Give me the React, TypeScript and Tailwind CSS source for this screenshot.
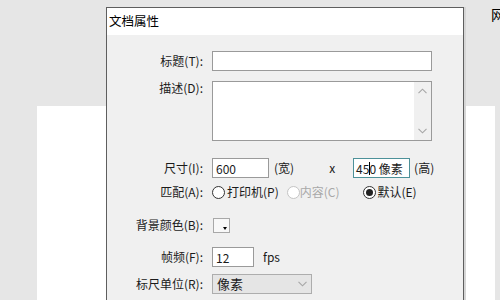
const font = "font-['Microsoft_YaHei','Noto_Sans_CJK_SC',sans-serif]";

const Radio = ({ checked = false, disabled = false }: { checked?: boolean; disabled?: boolean }) => (
  <span
    className={`flex h-[13px] w-[13px] items-center justify-center rounded-full border bg-white ${
      disabled ? "border-[#c4c4c4]" : "border-[#333333]"
    }`}
  >
    {checked && <span className="h-[7px] w-[7px] rounded-full bg-[#222222]" />}
  </span>
);

const Row = ({
  label,
  className = "",
  labelClass = "",
  children,
}: {
  label: string;
  className?: string;
  labelClass?: string;
  children?: React.ReactNode;
}) => (
  <div className={`flex ${className}`}>
    <div className={`w-[97px] shrink-0 pr-[1px] text-right ${labelClass}`}>{label}</div>
    <div className="ml-[8px] flex items-center">{children}</div>
  </div>
);

const Chevron = ({ up = false }: { up?: boolean }) => (
  <svg width="9" height="6" viewBox="0 0 9 6" className={up ? "rotate-180" : ""}>
    <path d="M0.5 0.8 L4.5 4.8 L8.5 0.8" fill="none" stroke="#a6a6a6" strokeWidth="1.1" />
  </svg>
);

export default function App() {
  return (
    <div className={`relative h-[300px] w-[500px] overflow-hidden bg-[#e6e6e6] text-[12px] text-[#1b1b1b] ${font}`}>
      {/* page behind the dialog */}
      <div className="flex h-full flex-col pl-[37px] pr-[5px] pt-[106px]">
        <div className="flex-1 bg-white" />
      </div>
      <div className="absolute left-[491px] top-[4px] text-[14px] leading-[20px] text-black">网</div>

      {/* dialog */}
      <div className="absolute left-[106px] top-[7px] flex h-[300px] w-[358px] flex-col border border-[#5e5e5e] bg-[#f0f0f0] shadow-[2px_0_0_#d6d6d6]">
        <div className="flex h-[27px] items-center bg-white pl-[2px] text-[12.5px] text-black">文档属性</div>

        <div className="flex flex-col leading-[20px]">
          <Row label="标题(T):" className="mt-[16px] h-[20px]">
            <div className="h-[20px] w-[220px] border border-[#9a9a9a] bg-white" />
          </Row>

          <Row label="描述(D):" className="mt-[10px] h-[60px]" labelClass="-mt-[3px]">
            <div className="flex h-[60px] w-[220px] self-start border border-[#9a9a9a] bg-white">
              <div className="flex-1" />
              <div className="flex w-[17px] flex-col items-center justify-between bg-[#f0f0f0] py-[6px]">
                <Chevron up />
                <Chevron />
              </div>
            </div>
          </Row>

          <Row label="尺寸(I):" className="mt-[17px] h-[20px]">
            <div className="h-[20px] w-[57px] border border-[#9a9a9a] bg-white pl-[3px]">600</div>
            <span className="ml-[5px]">(宽)</span>
            <span className="ml-[35px]">x</span>
            <div className="relative ml-[18px] h-[20px] w-[57px] border border-[#4d9199] bg-white pl-[2px]">
              450 像素
              <span className="absolute left-[15px] top-[3px] h-[13px] w-[1px] bg-black" />
            </div>
            <span className="ml-[4px]">(高)</span>
          </Row>

          <Row label="匹配(A):" className="mt-[4px] h-[20px]">
            <Radio />
            <span className="ml-[2px]">打印机(P)</span>
            <span className="ml-[8px]">
              <Radio disabled />
            </span>
            <span className="text-[#a8a8a8]">内容(C)</span>
            <span className="ml-[23px]">
              <Radio checked />
            </span>
            <span className="ml-[2px]">默认(E)</span>
          </Row>

          <Row label="背景颜色(B):" className="mt-[13px] h-[20px]">
            <div className="relative ml-[1px] h-[15px] w-[17px] border border-[#a8a8a8] bg-[#f8f8f8]">
              <span className="absolute bottom-[2px] right-[2px] h-0 w-0 border-x-[2.5px] border-t-[3px] border-x-transparent border-t-black" />
            </div>
          </Row>

          <Row label="帧频(F):" className="mt-[12px] h-[20px]">
            <div className="h-[20px] w-[42px] border border-[#9a9a9a] bg-white pl-[3px]">12</div>
            <span className="ml-[9px]">fps</span>
          </Row>

          <Row label="标尺单位(R):" className="mt-[7px] h-[20px]">
            <div className="flex h-[20px] w-[100px] items-center justify-between border border-[#adadad] bg-[#e5e5e5] pl-[4px] pr-[4px] text-[13px]">
              <span>像素</span>
              <Chevron />
            </div>
          </Row>
        </div>
      </div>
    </div>
  );
}
